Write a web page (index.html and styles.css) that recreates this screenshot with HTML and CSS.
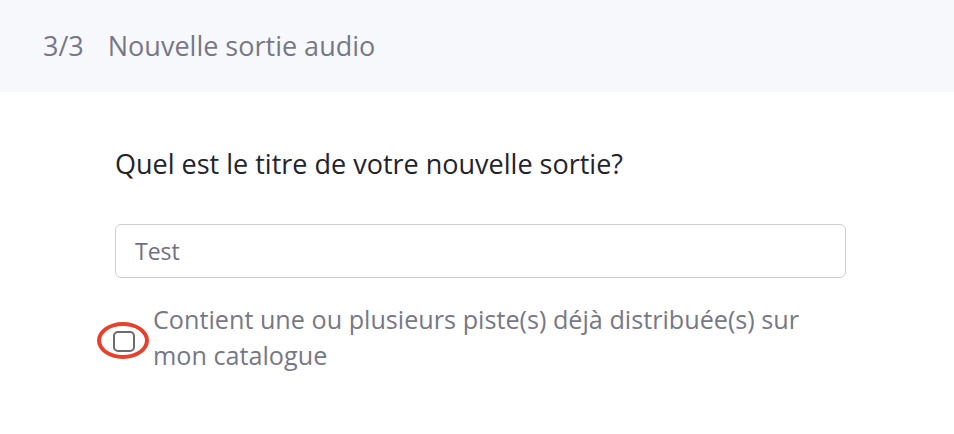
FILE: index.html
```html
<!DOCTYPE html>
<html lang="fr">
<head>
<meta charset="utf-8">
<link rel="stylesheet" href="styles.css">
</head>
<body>
<header class="header">
  <span class="step">3/3</span>
  <span class="title">Nouvelle sortie audio</span>
</header>
<main class="content">
  <h2 class="question">Quel est le titre de votre nouvelle sortie?</h2>
  <div class="input">Test</div>
  <div class="check-row">
    <span class="check-wrap">
      <span class="checkbox"></span>
      <span class="ring"></span>
    </span>
    <span class="label">Contient une ou plusieurs piste(s) déjà distribuée(s) sur mon catalogue</span>
  </div>
</main>
</body>
</html>
```
FILE: styles.css
```css
* { box-sizing: border-box; }
html, body { margin: 0; padding: 0; background: #fff; }
body { font-family: "Open Sans", "Noto Sans", sans-serif; width: 954px; height: 434px; overflow: hidden; }
.header {
  height: 92px;
  background: #f7f8fb;
  display: flex;
  align-items: center;
  padding-left: 43px;
  font-size: 27px;
  color: #777885;
  padding-bottom: 2px;
}
.step { margin-right: 24px; }
.content { padding: 52px 0 0 115px; }
.question {
  margin: 0;
  font-weight: 400;
  font-size: 27px;
  line-height: 40px;
  color: #23242b;
}
.input {
  margin-top: 40px;
  width: 731px;
  height: 54px;
  border: 1px solid #cfcfd2;
  border-radius: 6px;
  padding-left: 19px;
  display: flex;
  align-items: center;
  font-size: 23px;
  color: #6f7080;
}
.check-row {
  display: flex;
  align-items: center;
  margin-top: 23px;
}
.check-wrap {
  position: relative;
  width: 40px;
  margin-left: -2px;
  flex: none;
  height: 21px;
  top: 4px;
}
.checkbox {
  position: absolute;
  left: 0;
  top: 0;
  width: 22px;
  height: 21px;
  border: 2px solid #6a6a70;
  border-radius: 5px;
  background: #fff;
}
.ring {
  position: absolute;
  left: -16px;
  top: -9px;
  width: 52px;
  height: 37px;
  border: 4px solid #e8402a;
  border-radius: 50%;
}
.label {
  font-size: 25.2px;
  line-height: 36px;
  color: #777885;
  width: 680px;
}
```
